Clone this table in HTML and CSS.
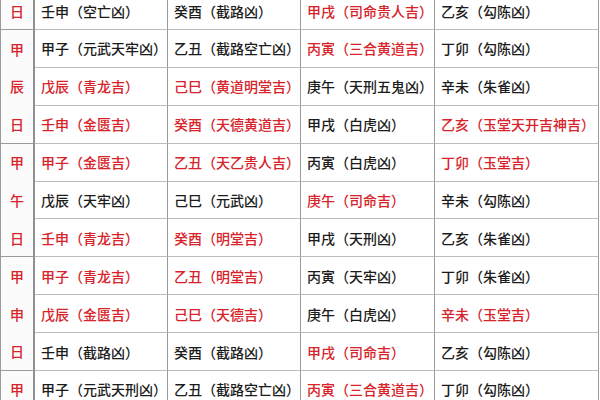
FILE: index.html
```html
<!DOCTYPE html>
<html lang="zh-CN">
<head>
<meta charset="utf-8">
<link rel="stylesheet" href="styles.css">
</head>
<body>
<div class="sheet">
  <div class="day span1"><span>日</span></div>
  <div class="c">壬申（空亡凶）</div><div class="c">癸酉（截路凶）</div><div class="c r">甲戌（司命贵人吉）</div><div class="c">乙亥（勾陈凶）</div>

  <div class="day span3"><span>甲</span><span>辰</span><span>日</span></div>
  <div class="c">甲子（元武天牢凶）</div><div class="c">乙丑（截路空亡凶）</div><div class="c r">丙寅（三合黄道吉）</div><div class="c">丁卯（勾陈凶）</div>
  <div class="c r">戊辰（青龙吉）</div><div class="c r">己巳（黄道明堂吉）</div><div class="c">庚午（天刑五鬼凶）</div><div class="c">辛未（朱雀凶）</div>
  <div class="c r">壬申（金匮吉）</div><div class="c r">癸酉（天德黄道吉）</div><div class="c">甲戌（白虎凶）</div><div class="c r">乙亥（玉堂天开吉神吉）</div>

  <div class="day span3"><span>甲</span><span>午</span><span>日</span></div>
  <div class="c r">甲子（金匮吉）</div><div class="c r">乙丑（天乙贵人吉）</div><div class="c">丙寅（白虎凶）</div><div class="c r">丁卯（玉堂吉）</div>
  <div class="c">戊辰（天牢凶）</div><div class="c">己巳（元武凶）</div><div class="c r">庚午（司命吉）</div><div class="c">辛未（勾陈凶）</div>
  <div class="c r">壬申（青龙吉）</div><div class="c r">癸酉（明堂吉）</div><div class="c">甲戌（天刑凶）</div><div class="c">乙亥（朱雀凶）</div>

  <div class="day span3"><span>甲</span><span>申</span><span>日</span></div>
  <div class="c r">甲子（青龙吉）</div><div class="c r">乙丑（明堂吉）</div><div class="c">丙寅（天牢凶）</div><div class="c">丁卯（朱雀凶）</div>
  <div class="c r">戊辰（金匮吉）</div><div class="c r">己巳（天德吉）</div><div class="c">庚午（白虎凶）</div><div class="c r">辛未（玉堂吉）</div>
  <div class="c">壬申（截路凶）</div><div class="c">癸酉（截路凶）</div><div class="c r">甲戌（司命吉）</div><div class="c">乙亥（勾陈凶）</div>

  <div class="day span1"><span>甲</span></div>
  <div class="c">甲子（元武天刑凶）</div><div class="c">乙丑（截路空亡凶）</div><div class="c r">丙寅（三合黄道吉）</div><div class="c">丁卯（勾陈凶）</div>
</div>
</body>
</html>
```

FILE: styles.css
```css
html, body {
  margin: 0;
  padding: 0;
  background: #ffffff;
  overflow: hidden;
}

body {
  width: 600px;
  height: 400px;
  font-family: "Noto Sans CJK SC", "Noto Sans", sans-serif;
  font-size: 14px;
  font-weight: 500;
  color: #1c1c1c;
}

.sheet {
  display: grid;
  grid-template-columns: 34px 133px 133px 134px 164px;
  grid-auto-rows: 37.9px;
  margin-top: -7.9px;
  border-left: 1px solid #9a9a9a;
  width: 598px;
}

.c {
  display: flex;
  align-items: center;
  padding-left: 6px;
  border-right: 1px solid #9a9a9a;
  border-bottom: 1px solid #bdbdbd;
  white-space: nowrap;
  overflow: hidden;
  box-sizing: border-box;
}

.r {
  color: #d8232a;
}

.day {
  display: grid;
  align-items: center;
  justify-items: center;
  color: #d8232a;
  font-size: 14px;
  border-right: 2px solid #8f8f8f;
  border-bottom: 1px solid #9a9a9a;
  box-sizing: border-box;
  background: #fbfbfb;
}

.span1 {
  grid-row: span 1;
  grid-template-rows: 1fr;
}

.span3 {
  grid-row: span 3;
  grid-template-rows: repeat(3, 1fr);
}
```
